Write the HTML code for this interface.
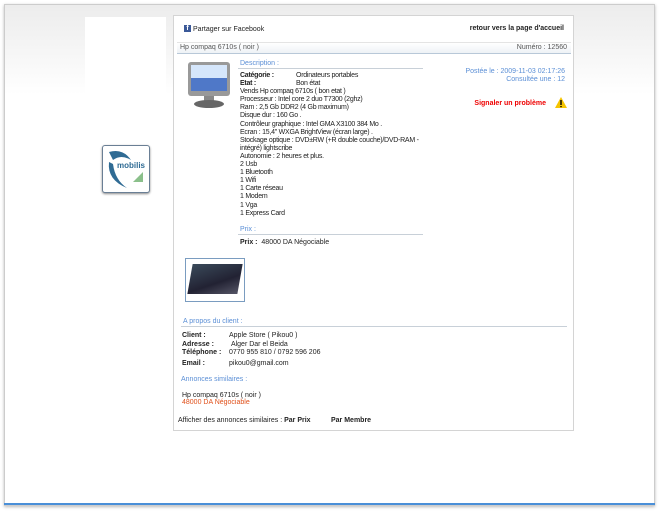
<!DOCTYPE html>
<html><head><meta charset="utf-8"><style>
*{margin:0;padding:0;box-sizing:border-box}
body{width:659px;height:512px;background:#fff;font-family:"Liberation Sans",sans-serif;font-size:7px;color:#222;position:relative;overflow:hidden}
.frame{position:absolute;left:4px;top:4px;width:651px;height:502px;border:1px solid #ccc;background:linear-gradient(#ececec,#fff 90px,#fff);box-shadow:0 1px 3px #bbb}
.blue{position:absolute;left:4px;top:503px;width:651px;height:2px;background:#4a8fd8}
.lp{position:absolute;left:85px;top:17px;width:81px;height:128px;background:#fff}
.logo{position:absolute;left:102px;top:145px;width:48px;height:48px;border:1px solid #6a7f95;border-radius:3px;background:#fff;box-shadow:0 1px 2px #888}
.box{position:absolute;left:173px;top:15px;width:401px;height:416px;background:#fff;border:1px solid #d4d4d4}
.a{position:absolute;white-space:nowrap}
.blue-t{color:#5b8fd6}
b{font-weight:bold}
.desc{letter-spacing:-0.25px}
</style></head><body>
<div class="frame"></div><div class="blue"></div>
<div class="lp"></div>
<div class="logo"><svg width="46" height="46" viewBox="0 0 46 46"><path d="M6 6 Q20 2 28 14 Q18 8 10 14 Z" fill="#2f6b94"/><path d="M6 16 Q4 34 24 42 Q12 34 10 18 Z" fill="#2f6b94"/><text x="14" y="22" font-size="8" font-weight="bold" fill="#2f6b94" font-family="Liberation Sans">mobilis</text><path d="M30 36 L40 26 L40 36 Z" fill="#8bc08b"/></svg></div>
<div class="box">
<div class="a" style="left:10px;top:9px;width:7px;height:7px;background:#3b5998;color:#fff;font-size:7px;font-weight:bold;text-align:center;line-height:8px">f</div>
<div class="a" style="left:19px;top:10px">Partager sur Facebook</div>
<div class="a" style="right:9px;top:9px;font-weight:bold">retour vers la page d'accueil</div>
<div class="a" style="left:3px;top:26px;width:394px;height:12px;background:linear-gradient(#fff,#eef2f6);border-bottom:1px solid #b8c8d8;border-top:1px solid #e4e4e4"></div>
<div class="a" style="left:6px;top:28px;color:#555">Hp compaq 6710s ( noir )</div>
<div class="a" style="right:6px;top:28px;color:#555">Numéro : 12560</div>
<svg class="a" style="left:13px;top:45px" width="44" height="48" viewBox="0 0 44 48"><rect x="1" y="1" width="42" height="34" rx="3" fill="#999"/><rect x="4" y="4" width="36" height="26" fill="#d5e6fb"/><rect x="4" y="17" width="36" height="13" fill="#4f78c8"/><rect x="17" y="35" width="10" height="6" fill="#888"/><ellipse cx="22" cy="43" rx="15" ry="4" fill="#666"/></svg>
<div class="a blue-t" style="left:66px;top:44px">Description :</div>
<div class="a" style="left:64px;top:52px;width:185px;border-top:1px solid #c8d0d8"></div>
<div class="a desc" style="left:66px;top:56px;line-height:8.1px">
<b>Catégorie :</b><span style="position:absolute;left:56px">Ordinateurs portables</span><br>
<b>Etat :</b><span style="position:absolute;left:56px">Bon état</span><br>
Vends Hp compaq 6710s ( bon etat )<br>Processeur : Intel core 2 duo T7300 (2ghz)<br>Ram : 2,5 Gb DDR2 (4 Gb maximum)<br>Disque dur : 160 Go .<br>Contrôleur graphique : Intel GMA X3100 384 Mo .<br>Ecran : 15,4" WXGA BrightView (écran large) .<br>Stockage optique : DVD±RW (+R double couche)/DVD-RAM -<br>intégré) lightscribe<br>Autonomie : 2 heures et plus.<br>2 Usb<br>1 Bluetooth<br>1 Wifi<br>1 Carte réseau<br>1 Modem<br>1 Vga<br>1 Express Card</div>
<div class="a blue-t" style="left:66px;top:210px">Prix :</div>
<div class="a" style="left:64px;top:218px;width:185px;border-top:1px solid #c8d0d8"></div>
<div class="a" style="left:66px;top:223px"><b>Prix :</b>&nbsp; 48000 DA Négociable</div>
<div class="a" style="left:11px;top:242px;width:60px;height:44px;border:1px solid #7a9cc0;background:#fff"><div style="margin:5px 4px;height:30px;background:linear-gradient(160deg,#3a4a5a,#223 60%,#556);transform:skewX(-10deg)"></div></div>
<div class="a blue-t" style="right:8px;top:52px">Postée le : 2009-11-03 02:17:26</div>
<div class="a blue-t" style="right:8px;top:60px">Consultée une : 12</div>
<div class="a" style="right:27px;top:84px;color:#e00;font-weight:bold">Signaler un problème</div>
<svg class="a" style="left:381px;top:81px" width="12" height="11"><path d="M6 0 L12 11 L0 11 Z" fill="#f5c400"/><rect x="5.3" y="3" width="1.4" height="5" fill="#000"/><rect x="5.3" y="9" width="1.4" height="1.2" fill="#000"/></svg>
<div class="a blue-t" style="left:9px;top:302px">A propos du client :</div>
<div class="a" style="left:7px;top:310px;width:386px;border-top:1px solid #c8d0d8"></div>
<div class="a" style="left:8px;top:316px;line-height:8.5px"><b>Client :</b><br><b>Adresse :</b><br><b>Téléphone :</b><br><b style="position:relative;top:2px">Email :</b></div>
<div class="a" style="left:55px;top:316px;line-height:8.5px">Apple Store ( Pikou0 )<br>&nbsp;Alger Dar el Beida<br>0770 955 810 / 0792 596 206<br><span style="position:relative;top:2px">pikou0@gmail.com</span></div>
<div class="a blue-t" style="left:7px;top:360px">Annonces similaires :</div>
<div class="a" style="left:8px;top:376px">Hp compaq 6710s ( noir )</div>
<div class="a" style="left:8px;top:383px;color:#e0501a">48000 DA Négociable</div>
<div class="a" style="left:4px;top:401px">Afficher des annonces similaires : <b>Par Prix</b></div>
<div class="a" style="left:157px;top:401px"><b>Par Membre</b></div>
</div>
</body></html>
